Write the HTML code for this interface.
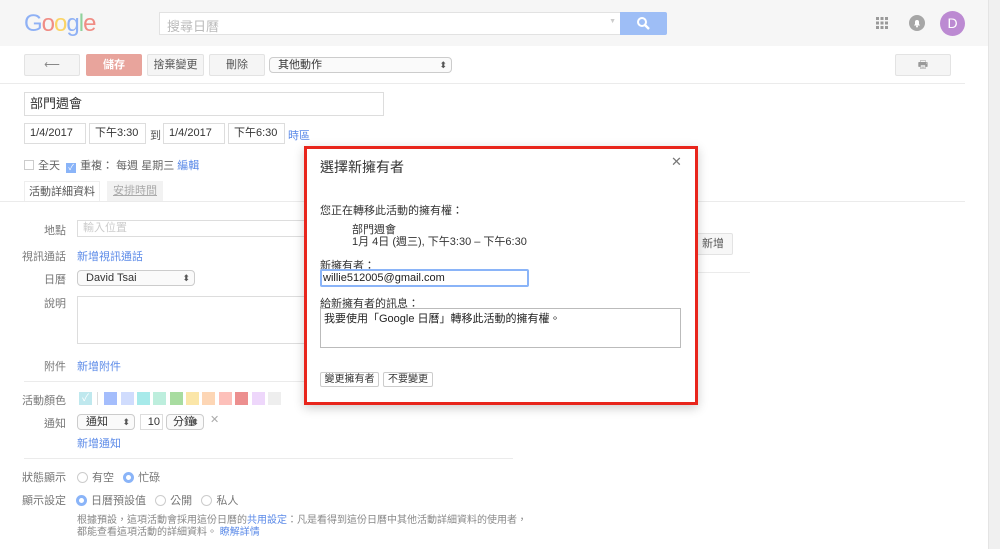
<!DOCTYPE html>
<html><head><meta charset="utf-8"><style>
*{box-sizing:border-box;margin:0;padding:0}
body{width:1000px;height:549px;overflow:hidden;background:#fff;font-family:"Liberation Sans","Noto Sans CJK TC",sans-serif;font-size:11px;color:#555;position:relative}
.a{position:absolute}
.btn{position:absolute;border:1px solid #e3e3e3;background:#f5f5f5;border-radius:2px;text-align:center;color:#555;font-size:11px}
.inp{position:absolute;border:1px solid #ddd;background:#fff;color:#333;padding-left:5px}
.sel{position:absolute;border:1px solid #ccc;border-radius:4px;background:#fafafa;color:#333;padding-left:8px}
.sel:after{content:"⬍";position:absolute;right:4px;top:0;font-size:9px;color:#555}
.lbl{position:absolute;width:66px;text-align:right;color:#777}
.lnk{color:#5b8ae8}
.sw{position:absolute;width:13px;height:13px;top:392px}
.rad{display:inline-block;width:11px;height:11px;border:1px solid #ccc;border-radius:50%;vertical-align:-2px;margin-right:4px}
.rad.on{border:3px solid #8ab4f8;background:#fff}
.hr{position:absolute;height:1px;background:#ebebeb}
</style></head><body>
<div class="a" style="left:0;top:0;width:988px;height:46px;background:#f6f6f6"></div>
<div class="a" style="left:988px;top:0;width:12px;height:549px;background:#f0f0f0;border-left:1px solid #e4e4e4"></div>
<div class="a" style="left:24px;top:10px;font-size:24px;letter-spacing:-1px;font-family:'Liberation Sans',sans-serif"><span style="color:#8fb1f5">G</span><span style="color:#f08c84">o</span><span style="color:#fbd466">o</span><span style="color:#8fb1f5">g</span><span style="color:#8fd29c">l</span><span style="color:#f08c84">e</span></div>
<div class="a" style="left:159px;top:12px;width:462px;height:23px;background:#fff;border:1px solid #e2e2e2;color:#bbb;font-size:13px;padding:3px 0 0 7px">搜尋日曆<span style="position:absolute;right:4px;top:5px;font-size:7px;color:#ccc">▼</span></div>
<div class="a" style="left:620px;top:12px;width:47px;height:23px;background:#9ebef6;border-radius:0 2px 2px 0"><svg width="47" height="23"><circle cx="22" cy="10" r="4" fill="none" stroke="#fff" stroke-width="2"/><line x1="25" y1="13" x2="29" y2="17" stroke="#fff" stroke-width="2.4"/></svg></div>
<svg class="a" style="left:875px;top:16px" width="14" height="14"><g fill="#9a9a9a"><rect x="1" y="1" width="3" height="3"/><rect x="5.5" y="1" width="3" height="3"/><rect x="10" y="1" width="3" height="3"/><rect x="1" y="5.5" width="3" height="3"/><rect x="5.5" y="5.5" width="3" height="3"/><rect x="10" y="5.5" width="3" height="3"/><rect x="1" y="10" width="3" height="3"/><rect x="5.5" y="10" width="3" height="3"/><rect x="10" y="10" width="3" height="3"/></g></svg>
<svg class="a" style="left:909px;top:15px" width="16" height="16"><circle cx="8" cy="8" r="8" fill="#a6a6a6"/><path d="M5 10.5h6l-1-1.5V7a2 2 0 0 0-4 0v2z" fill="#fff"/><circle cx="8" cy="11.5" r="1" fill="#fff"/></svg>
<div class="a" style="left:940px;top:11px;width:25px;height:25px;border-radius:50%;background:#bc8ad2;color:#fff;font-size:14px;text-align:center;line-height:25px">D</div>

<div class="btn" style="left:24px;top:54px;width:56px;height:22px;line-height:20px;color:#888">⟵</div>
<div class="btn" style="left:86px;top:54px;width:56px;height:22px;line-height:20px;background:#e8a49c;border-color:#e8a49c;color:#fff;font-weight:bold">儲存</div>
<div class="btn" style="left:147px;top:54px;width:57px;height:22px;line-height:20px">捨棄變更</div>
<div class="btn" style="left:209px;top:54px;width:56px;height:22px;line-height:20px">刪除</div>
<div class="sel" style="left:269px;top:57px;width:183px;height:16px;line-height:14px">其他動作</div>
<div class="btn" style="left:895px;top:54px;width:56px;height:22px;line-height:20px;color:#999">🖶</div>
<div class="hr" style="left:0;top:83px;width:965px"></div>

<div class="inp" style="left:24px;top:92px;width:360px;height:24px;line-height:22px;font-size:13px">部門週會</div>
<div class="inp" style="left:24px;top:123px;width:62px;height:21px;line-height:19px">1/4/2017</div>
<div class="inp" style="left:89px;top:123px;width:57px;height:21px;line-height:19px">下午3:30</div>
<div class="a" style="left:150px;top:127px">到</div>
<div class="inp" style="left:163px;top:123px;width:62px;height:21px;line-height:19px">1/4/2017</div>
<div class="inp" style="left:228px;top:123px;width:57px;height:21px;line-height:19px">下午6:30</div>
<div class="a lnk" style="left:288px;top:127px">時區</div>
<div class="a" style="left:24px;top:157px;color:#666"><span style="display:inline-block;width:10px;height:10px;border:1px solid #ccc;vertical-align:-1px;margin-right:4px"></span>全天 &nbsp;<span style="display:inline-block;width:10px;height:10px;background:#8ab4f8;color:#fff;font-size:8px;line-height:10px;text-align:center;vertical-align:-1px;margin-right:4px">✓</span>重複： 每週 星期三 <span class="lnk">編輯</span></div>
<div class="a" style="left:24px;top:181px;width:76px;height:21px;border:1px solid #eee;border-bottom:none;background:#fff;text-align:center;line-height:20px;color:#555">活動詳細資料</div>
<div class="a" style="left:107px;top:181px;width:56px;height:20px;background:#f2f2f2;text-align:center;line-height:20px;color:#aaa;text-decoration:underline">安排時間</div>
<div class="hr" style="left:0;top:201px;width:965px"></div>

<div class="lbl" style="top:222px">地點</div><div class="inp" style="left:77px;top:220px;width:240px;height:17px;line-height:15px;color:#ccc">輸入位置</div>
<div class="lbl" style="top:248px">視訊通話</div><div class="a lnk" style="left:77px;top:248px">新增視訊通話</div>
<div class="lbl" style="top:271px">日曆</div><div class="sel" style="left:77px;top:270px;width:118px;height:16px;line-height:14px">David Tsai</div>
<div class="lbl" style="top:295px">說明</div><div class="inp" style="left:77px;top:296px;width:240px;height:48px"></div>
<div class="lbl" style="top:358px">附件</div><div class="a lnk" style="left:77px;top:358px">新增附件</div>
<div class="hr" style="left:24px;top:381px;width:489px"></div>
<div class="lbl" style="top:392px">活動顏色</div>
<div class="sw" style="left:79px;background:#bfe8ee;color:#fff;font-size:10px;line-height:13px;text-align:center">✓</div>
<div class="a" style="left:97px;top:392px;width:1px;height:13px;background:#ddd"></div>
<div class="sw" style="left:104px;background:#a4bdfc"></div><div class="sw" style="left:121px;background:#d0dcfd"></div><div class="sw" style="left:137px;background:#a7eaea"></div><div class="sw" style="left:153px;background:#bdeedd"></div><div class="sw" style="left:170px;background:#a8dca0"></div><div class="sw" style="left:186px;background:#fbe6a8"></div><div class="sw" style="left:202px;background:#fdd6b5"></div><div class="sw" style="left:219px;background:#fdc0ba"></div><div class="sw" style="left:235px;background:#ec8f8f"></div><div class="sw" style="left:252px;background:#eed7fb"></div><div class="sw" style="left:268px;background:#eeeeee"></div>
<div class="lbl" style="top:415px">通知</div>
<div class="sel" style="left:77px;top:414px;width:58px;height:16px;line-height:14px">通知</div>
<div class="inp" style="left:140px;top:414px;width:23px;height:16px;line-height:14px;text-align:right;padding-right:2px">10</div>
<div class="sel" style="left:166px;top:414px;width:38px;height:16px;line-height:14px;padding-left:6px">分鐘</div>
<div class="a" style="left:210px;top:413px;color:#aaa">✕</div>
<div class="a lnk" style="left:77px;top:435px">新增通知</div>
<div class="hr" style="left:24px;top:458px;width:489px"></div>
<div class="lbl" style="top:469px">狀態顯示</div><div class="a" style="left:77px;top:469px;color:#777"><span class="rad"></span>有空 &nbsp;&nbsp;<span class="rad on"></span>忙碌</div>
<div class="lbl" style="top:492px">顯示設定</div><div class="a" style="left:76px;top:492px;color:#777"><span class="rad on"></span>日曆預設值 &nbsp;&nbsp;<span class="rad"></span>公開 &nbsp;&nbsp;<span class="rad"></span>私人</div>
<div class="a" style="left:77px;top:515px;width:452px;font-size:10px;line-height:12px;color:#888">根據預設，這項活動會採用這份日曆的<span class="lnk">共用設定</span>：凡是看得到這份日曆中其他活動詳細資料的使用者，都能查看這項活動的詳細資料。 <span class="lnk">瞭解詳情</span></div>

<div class="btn" style="left:693px;top:233px;width:40px;height:22px;line-height:20px;background:#f7f7f7">新增</div>
<div class="hr" style="left:600px;top:272px;width:150px"></div>

<div class="a" style="left:304px;top:146px;width:394px;height:259px;border:3px solid #e8251c;background:#fff;box-shadow:0 3px 10px rgba(0,0,0,.2)"></div>
<div class="a" style="left:320px;top:157px;font-size:14px;color:#333">選擇新擁有者</div>
<div class="a" style="left:671px;top:154px;font-size:13px;color:#777">✕</div>
<div class="a" style="left:320px;top:202px;color:#333">您正在轉移此活動的擁有權：</div>
<div class="a" style="left:352px;top:224px;color:#333;line-height:12px">部門週會<br>1月 4日 (週三), 下午3:30 – 下午6:30</div>
<div class="a" style="left:320px;top:257px;color:#333">新擁有者：</div>
<div class="a" style="left:320px;top:269px;width:209px;height:18px;border:2px solid #8ab4f8;border-radius:2px;color:#222;padding-left:1px;line-height:14px">willie512005@gmail.com</div>
<div class="a" style="left:320px;top:295px;color:#333">給新擁有者的訊息：</div>
<div class="a" style="left:320px;top:308px;width:361px;height:40px;border:1px solid #bbb;color:#222;padding:1px 3px">我要使用「Google 日曆」轉移此活動的擁有權。</div>
<div class="btn" style="left:320px;top:372px;width:59px;height:15px;line-height:13px;background:#fff;border-color:#ccc;color:#333;font-size:10px">變更擁有者</div>
<div class="btn" style="left:383px;top:372px;width:50px;height:15px;line-height:13px;background:#fff;border-color:#ccc;color:#333;font-size:10px">不要變更</div>
</body></html>
